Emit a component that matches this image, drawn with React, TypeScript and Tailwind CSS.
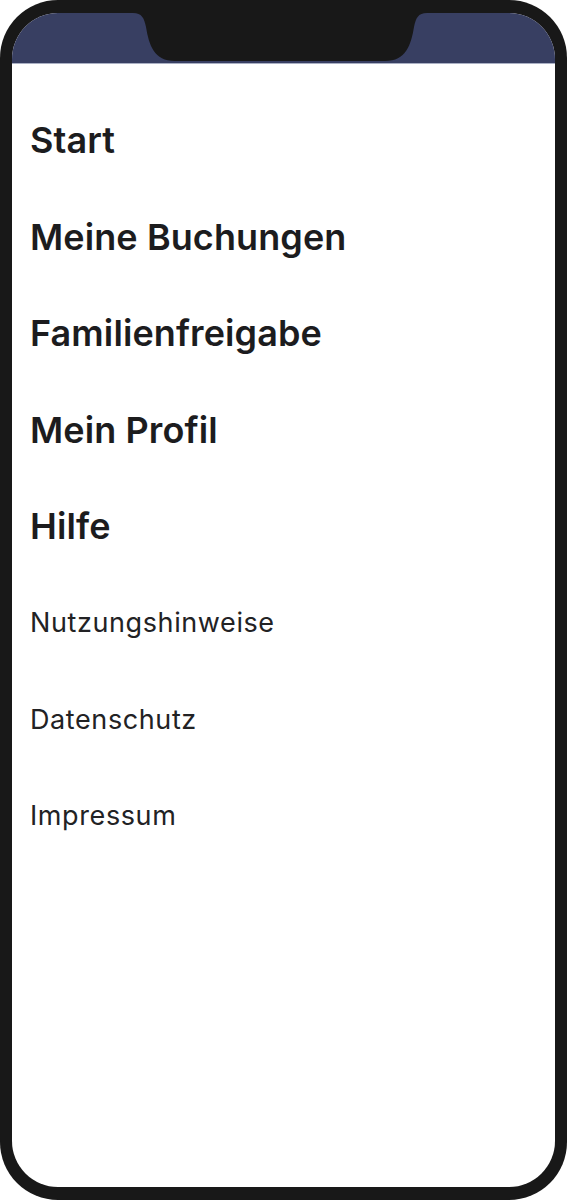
import React from "react";

const mainItems = ["Start", "Meine Buchungen", "Familienfreigabe", "Mein Profil", "Hilfe"];
const subItems = ["Nutzungshinweise", "Datenschutz", "Impressum"];

const Notch: React.FC = () => (
  <svg
    className="absolute left-[121px] top-0"
    width="294"
    height="49"
    viewBox="0 0 294 49"
  >
    <path
      d="M0 0 C9 0 11 5 13 14 C16 32 21 48 42 48 L252 48 C273 48 278 32 281 14 C283 5 285 0 294 0 Z"
      fill="#181818"
    />
  </svg>
);

export default function App() {
  return (
    <div className="w-[567px] h-[1200px] bg-white font-['Inter',sans-serif]">
      <div className="w-full h-full rounded-[58px] bg-[#181818] px-[12px] pt-[13px] pb-[13px]">
        <div className="relative w-full h-full rounded-[46px] overflow-hidden bg-white">
          <div className="h-[51px] bg-[#383f62] border-b border-[#aab0c4]" />
          <Notch />
          <nav className="flex flex-col pt-[28px] pl-[18px]">
            {mainItems.map((item) => (
              <div key={item} className="h-[96.5px] flex items-center">
                <span className="text-[36px] leading-none font-semibold text-[#1c1c1e] tracking-[0.1px]">
                  {item}
                </span>
              </div>
            ))}
            {subItems.map((item) => (
              <div key={item} className="h-[96.5px] flex items-center">
                <span className="text-[27px] leading-none font-normal text-[#222224] tracking-[0.6px]">
                  {item}
                </span>
              </div>
            ))}
          </nav>
        </div>
      </div>
    </div>
  );
}
